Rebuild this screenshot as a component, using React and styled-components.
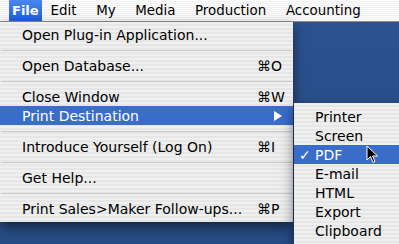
import styled, { createGlobalStyle } from "styled-components";

const GlobalStyle = createGlobalStyle`
  html, body { margin: 0; padding: 0; }
  body { font-family: "DejaVu Sans", "Liberation Sans", sans-serif; }
`;

const Desktop = styled.div`
  position: relative;
  width: 399px;
  height: 244px;
  overflow: hidden;
  background: linear-gradient(to bottom, #2c5390 0%, #284c85 100%);
`;

const MenuBar = styled.div`
  display: flex;
  align-items: stretch;
  height: 21px;
  padding-left: 9px;
  border-bottom: 1px solid #8e8e8e;
  background: repeating-linear-gradient(to bottom, #fbfbfb 0, #fbfbfb 1px, #f1f1f1 1px, #f1f1f1 2px);
`;

const Title = styled.div`
  display: flex;
  align-items: center;
  padding: 0 ${p => p.pad ?? 10}px 0 ${p => p.padLeft ?? 9.6}px;
  font-size: ${p => (p.active ? 13 : 13.4)}px;
  color: ${p => (p.active ? "#fff" : "#000")};
  font-weight: ${p => (p.active ? "bold" : "normal")};
  background: ${p => (p.active ? "linear-gradient(to bottom, #4a88ee, #1b5fdc)" : "transparent")};
`;

const Panel = styled.div`
  position: absolute;
  top: ${p => p.top}px;
  left: ${p => p.left}px;
  width: ${p => p.width}px;
  padding: ${p => p.padTop}px 0 4px;
  background: repeating-linear-gradient(to bottom, #efefef 0, #efefef 2px, #e6e6e6 2px, #e6e6e6 4px);
  box-shadow: 0 5px 12px rgba(0, 0, 0, 0.55);
`;

const Item = styled.div`
  display: flex;
  align-items: center;
  height: 19px;
  padding-left: ${p => p.indent || 22}px;
  font-size: 14px;
  color: ${p => (p.selected ? "#fff" : "#000")};
  background: ${p => (p.selected ? "#3a6cc9" : "transparent")};
`;

const Label = styled.span`
  flex: 1;
  white-space: nowrap;
`;

const Shortcut = styled.span`
  width: 36px;
  white-space: nowrap;
`;

const Check = styled.span`
  width: 16px;
  margin-left: -16px;
  font-size: 14px;
`;

const Arrow = styled.span`
  width: 0;
  height: 0;
  margin-right: 11px;
  border-top: 5px solid transparent;
  border-bottom: 5px solid transparent;
  border-left: 8px solid #fff;
`;

const Separator = styled.div`
  height: 12px;
  display: flex;
  align-items: center;
  &::after {
    content: "";
    flex: 1;
    height: 1px;
    margin: 0 1px;
    background: #c8c8c8;
  }
`;

const Cursor = styled.svg`
  position: absolute;
  left: 366px;
  top: 145px;
`;

const main = [
  { label: "Open Plug-in Application..." },
  "sep",
  { label: "Open Database...", key: "⌘O" },
  "sep",
  { label: "Close Window", key: "⌘W" },
  { label: "Print Destination", sub: true, selected: true },
  "sep",
  { label: "Introduce Yourself (Log On)", key: "⌘I" },
  "sep",
  { label: "Get Help..." },
  "sep",
  { label: "Print Sales>Maker Follow-ups...", key: "⌘P" },
];

const dest = ["Printer", "Screen", "PDF", "E-mail", "HTML", "Export", "Clipboard"];

export default function App() {
  return (
    <>
      <GlobalStyle />
      <Desktop>
        <MenuBar>
          <Title active padLeft={3} pad={3}>File</Title>
          <Title padLeft={9}>Edit</Title>
          <Title>My</Title>
          <Title>Media</Title>
          <Title>Production</Title>
          <Title>Accounting</Title>
        </MenuBar>

        <Panel top={22} left={0} width={293} padTop={3}>
          {main.map((m, i) =>
            m === "sep" ? (
              <Separator key={i} />
            ) : (
              <Item key={i} selected={m.selected}>
                <Label>{m.label}</Label>
                {m.key && <Shortcut>{m.key}</Shortcut>}
                {m.sub && <Arrow />}
              </Item>
            )
          )}
        </Panel>

        <Panel top={103} left={294} width={110} padTop={4}>
          {dest.map(d => (
            <Item key={d} indent={21} selected={d === "PDF"}>
              {d === "PDF" && <Check>✓</Check>}
              <Label>{d}</Label>
            </Item>
          ))}
        </Panel>

        <Cursor width="13" height="20" viewBox="0 0 13 20">
          <path d="M1 1 L1 15 L4.5 11.5 L7 17.5 L9 16.6 L6.6 11 L11.5 11 Z" fill="#000" stroke="#fff" strokeWidth="1" strokeLinejoin="round" />
        </Cursor>
      </Desktop>
    </>
  );
}
